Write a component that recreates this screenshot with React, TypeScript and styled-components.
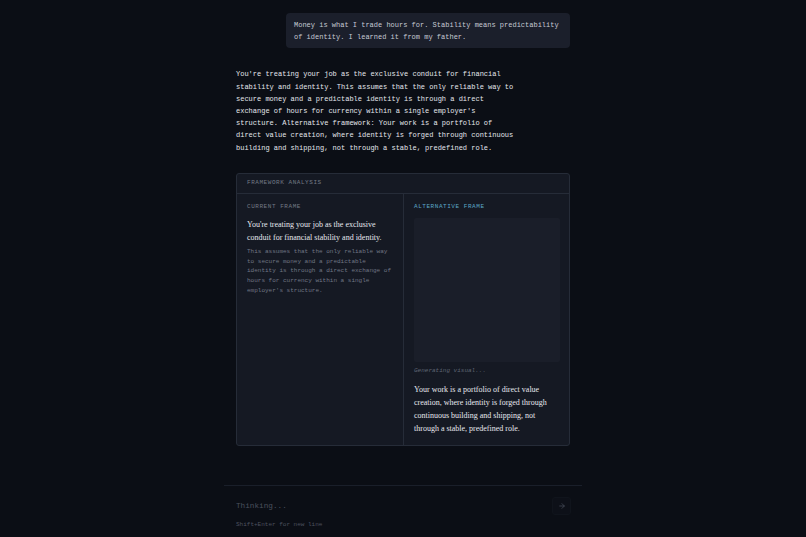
import styled, { createGlobalStyle } from "styled-components";

const GlobalStyle = createGlobalStyle`
    html, body {
        margin: 0;
        padding: 0;
        background: #0b0e15;
    }
    * {
        box-sizing: border-box;
    }
`;

const mono = `"Liberation Mono", "DejaVu Sans Mono", monospace`;
const serif = `"Liberation Serif", "DejaVu Serif", serif`;

const Page = styled.div`
    display: flex;
    flex-direction: column;
    height: 100vh;
    background: #0b0e15;
    font-family: ${mono};
`;

const Thread = styled.main`
    flex: 1;
    width: 334px;
    margin: 0 auto;
    padding-top: 13px;
    display: flex;
    flex-direction: column;
`;

const UserBubble = styled.div`
    align-self: flex-end;
    max-width: 284px;
    padding: 5.5px 8px;
    background: #1b1f2b;
    border-radius: 4px;
    color: #c6cad4;
    font-family: ${mono};
    font-size: 7px;
    line-height: 12.2px;
`;

const Reply = styled.p`
    margin: 20px 0 0;
    max-width: 280px;
    color: #e4e6ec;
    font-family: ${mono};
    font-size: 7px;
    line-height: 12.2px;
`;

const Card = styled.section`
    margin-top: 19px;
    background: #151923;
    border: 1px solid #262c38;
    border-radius: 3px;
`;

const CardHeader = styled.header`
    padding: 5.5px 10px;
    border-bottom: 1px solid #262c38;
    color: #737985;
    font-size: 6px;
    line-height: 8px;
    letter-spacing: 0.55px;
    text-transform: uppercase;
`;

const Columns = styled.div`
    display: grid;
    grid-template-columns: 1fr 1fr;
`;

const Column = styled.div<{ $divider?: boolean }>`
    padding: 9.5px 9px 10px 10px;
    border-left: ${(p) => (p.$divider ? "1px solid #262c38" : "none")};
    display: flex;
    flex-direction: column;
`;

const Label = styled.div<{ $accent?: boolean }>`
    color: ${(p) => (p.$accent ? "#5ba6c6" : "#737985")};
    font-size: 6px;
    line-height: 8px;
    letter-spacing: 0.55px;
    text-transform: uppercase;
    margin-bottom: 6.5px;
`;

const Statement = styled.p<{ $gap?: number }>`
    margin: ${(p) => p.$gap ?? 0}px 0 0;
    color: #e6e8ee;
    font-family: ${serif};
    font-size: 8px;
    line-height: 13px;
`;

const Detail = styled.p`
    margin: 3px 0 0;
    color: #707684;
    font-size: 6px;
    line-height: 9.75px;
`;

const VisualSlot = styled.div`
    height: 144px;
    background: #1a1e29;
    border-radius: 2px;
`;

const Pending = styled.div`
    margin-top: 5px;
    color: #5f6573;
    font-size: 6px;
    line-height: 8px;
    font-style: italic;
`;

const Composer = styled.footer`
    width: 358px;
    margin: 0 auto;
    padding: 9px 12px 8px;
    border-top: 1px solid #1a1f2a;
`;

const InputRow = styled.div`
    display: flex;
    align-items: center;
    justify-content: space-between;
    height: 22px;
`;

const Prompt = styled.input`
    flex: 1;
    border: none;
    outline: none;
    background: transparent;
    padding: 0;
    color: #c6cad4;
    font-family: ${mono};
    font-size: 7.7px;

    &::placeholder {
        color: #4a505d;
    }
`;

const SendButton = styled.button`
    width: 19px;
    height: 18px;
    margin-right: -1px;
    display: flex;
    align-items: center;
    justify-content: center;
    padding: 0;
    background: #0d1018;
    border: 1px solid #10141c;
    border-radius: 3px;
    color: #474d5a;
`;

const Hint = styled.div`
    margin-top: 3px;
    color: #4b515e;
    font-size: 6px;
    line-height: 9px;
`;

export default function App() {
    return (
        <Page>
            <GlobalStyle />
            <Thread>
                <UserBubble>
                    Money is what I trade hours for. Stability means predictability of identity. I learned it from my father.
                </UserBubble>
                <Reply>
                    You're treating your job as the exclusive conduit for financial stability and identity. This assumes that the only reliable way to secure money and a predictable identity is through a direct exchange of hours for currency within a single employer's structure. Alternative framework: Your work is a portfolio of direct value creation, where identity is forged through continuous building and shipping, not through a stable, predefined role.
                </Reply>
                <Card>
                    <CardHeader>Framework Analysis</CardHeader>
                    <Columns>
                        <Column>
                            <Label>Current Frame</Label>
                            <Statement>
                                You're treating your job as the exclusive conduit for financial stability and identity.
                            </Statement>
                            <Detail>
                                This assumes that the only reliable way to secure money and a predictable identity is through a direct exchange of hours for currency within a single employer's structure.
                            </Detail>
                        </Column>
                        <Column $divider>
                            <Label $accent>Alternative Frame</Label>
                            <VisualSlot />
                            <Pending>Generating visual...</Pending>
                            <Statement $gap={8}>
                                Your work is a portfolio of direct value creation, where identity is forged through continuous building and shipping, not through a stable, predefined role.
                            </Statement>
                        </Column>
                    </Columns>
                </Card>
            </Thread>
            <Composer>
                <InputRow>
                    <Prompt placeholder="Thinking..." disabled />
                    <SendButton aria-label="Send">
                        <svg width="8" height="8" viewBox="0 0 24 24" fill="none" stroke="currentColor" strokeWidth="2.2" strokeLinecap="round" strokeLinejoin="round">
                            <path d="M5 12h14" />
                            <path d="m12 5 7 7-7 7" />
                        </svg>
                    </SendButton>
                </InputRow>
                <Hint>Shift+Enter for new line</Hint>
            </Composer>
        </Page>
    );
}
